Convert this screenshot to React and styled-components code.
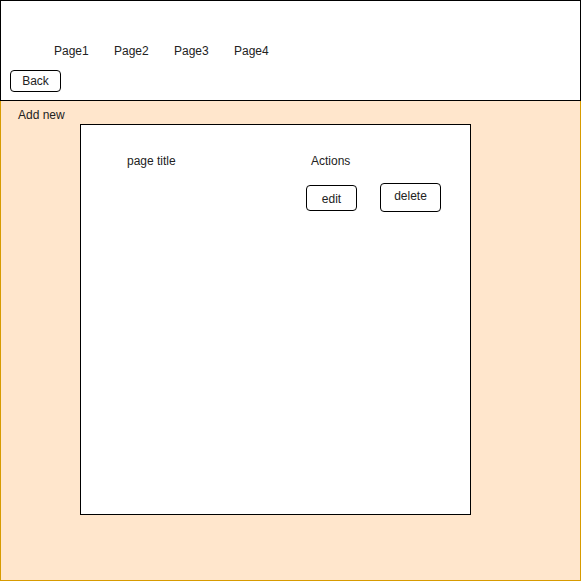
import styled, { createGlobalStyle } from "styled-components";

const GlobalStyle = createGlobalStyle`
  body {
    margin: 0;
    background: #fff;
    font-family: "Liberation Sans", Arial, sans-serif;
    font-size: 12px;
    color: #222;
  }
`;

function App() {
  return (
    <>
      <GlobalStyle />
      <Page>
        <Header>
          <Nav>
            <NavLink>Page1</NavLink>
            <NavLink>Page2</NavLink>
            <NavLink>Page3</NavLink>
            <NavLink>Page4</NavLink>
          </Nav>
          <BackButton>Back</BackButton>
        </Header>
        <Main>
          <AddNew>Add new</AddNew>
          <Card>
            <Table>
              <HeadCell>page title</HeadCell>
              <HeadCell $indent>Actions</HeadCell>
              <span />
              <Actions>
                <ActionButton $w={51} $h={26}>
                  edit
                </ActionButton>
                <ActionButton $w={61} $h={29} $lift>
                  delete
                </ActionButton>
              </Actions>
            </Table>
          </Card>
        </Main>
      </Page>
    </>
  );
}

const Page = styled.div`
  width: 581px;
  height: 581px;
  display: flex;
  flex-direction: column;
`;

const Header = styled.header`
  box-sizing: border-box;
  height: 101px;
  border: 1px solid #000;
  padding: 43px 0 0 9px;
  display: flex;
  flex-direction: column;
  align-items: flex-start;
`;

const Nav = styled.nav`
  display: grid;
  grid-template-columns: repeat(4, 60px);
  padding-left: 44px;
  line-height: 14px;
`;

const NavLink = styled.span`
  cursor: pointer;
`;

const BackButton = styled.button`
  margin-top: 12px;
  box-sizing: border-box;
  width: 51px;
  height: 22px;
  padding: 0;
  border: 1px solid #000;
  border-radius: 4px;
  background: #fff;
  font: inherit;
  font-size: 12px;
  color: #222;
`;

const Main = styled.main`
  box-sizing: border-box;
  flex: 1;
  background: #ffe6cc;
  border: 1px solid #d79b00;
  border-top: none;
  padding: 7px 0 0 17px;
`;

const AddNew = styled.div`
  line-height: 14px;
`;

const Card = styled.section`
  box-sizing: border-box;
  margin: 2px 0 0 62px;
  width: 391px;
  height: 391px;
  background: #fff;
  border: 1px solid #000;
  padding: 29px 0 0 46px;
`;

const Table = styled.div`
  display: grid;
  grid-template-columns: 179px auto;
  row-gap: 15px;
  align-items: center;
`;

const HeadCell = styled.div`
  line-height: 14px;
  padding-left: ${(p) => (p.$indent ? "5px" : "0")};
`;

const Actions = styled.div`
  display: flex;
  align-items: center;
  gap: 23px;
`;

const ActionButton = styled.button`
  box-sizing: border-box;
  width: ${(p) => p.$w}px;
  height: ${(p) => p.$h}px;
  padding: ${(p) => (p.$lift ? "0 0 3px" : "2px 0 0")};
  border: 1px solid #000;
  border-radius: 4px;
  background: #fff;
  font: inherit;
  font-size: 12px;
  color: #222;
`;

export default App;
